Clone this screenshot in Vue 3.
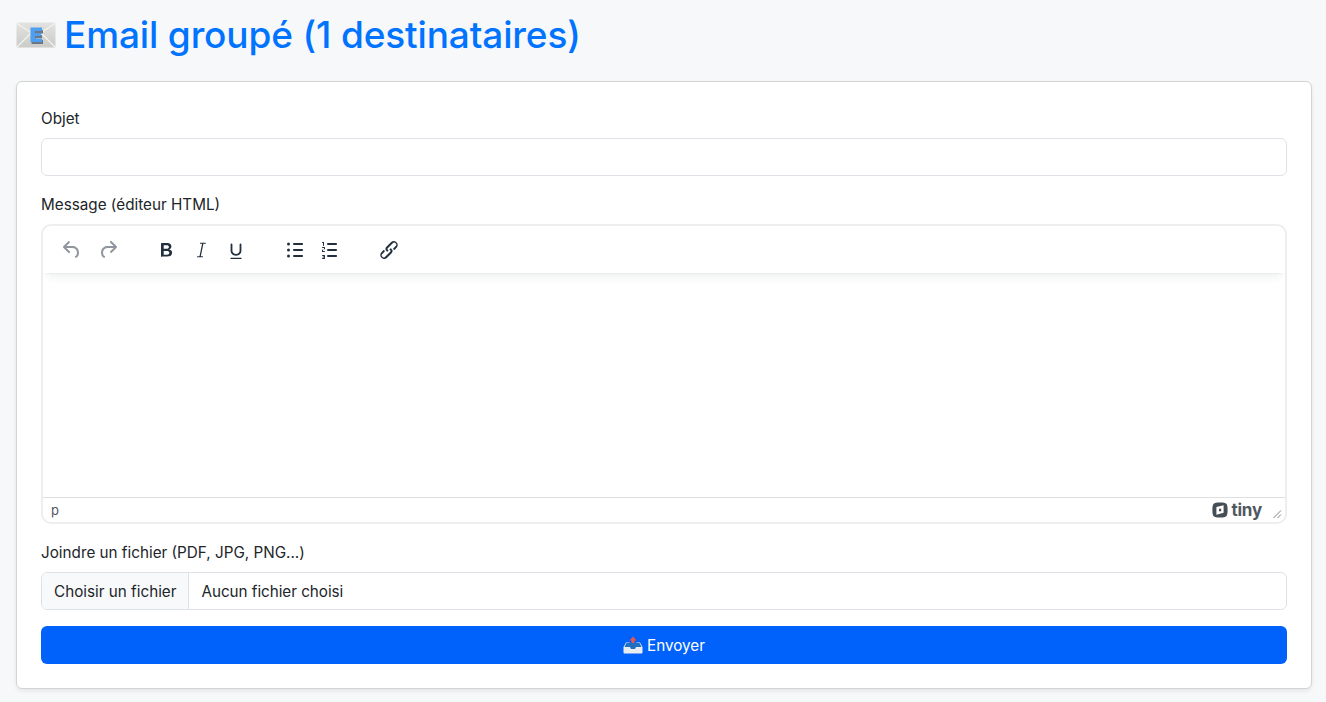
<script setup>
</script>

<template>
  <div class="page">
    <h1 class="title">
      <svg class="mail" viewBox="0 0 40 26" aria-hidden="true">
        <defs>
          <linearGradient id="env" x1="0" y1="0" x2="0" y2="1">
            <stop offset="0" stop-color="#e2e2e0" />
            <stop offset="1" stop-color="#cbcbc8" />
          </linearGradient>
        </defs>
        <rect x="0.5" y="0.5" width="39" height="25" rx="1.5" fill="url(#env)" />
        <path d="M1 1.500 L20 14 L39 1.500 M1 25 L14 12 M39 25 L26 12" fill="none" stroke="#f2f2f0" stroke-width="1.200" />
        <path d="M15.500 8 H27 V11.500 H20 V13 H26 V16 H20 V18 H27 V22 H15.500 Z" fill="#6d7782" />
        <path d="M14.500 5.500 H26 V9 H19 V11 H25 V14 H19 V16.500 H26 V20 H14.500 Z" fill="#4e9ff2" />
      </svg>
      <span>Email groupé (1 destinataires)</span>
    </h1>

    <form class="card" @submit.prevent>
      <div class="field">
        <label class="label" for="objet">Objet</label>
        <input id="objet" class="control" type="text" />
      </div>

      <div class="field">
        <label class="label">Message (éditeur HTML)</label>
        <div class="editor">
          <div class="toolbar">
            <div class="group first">
              <button class="tool" type="button" aria-label="Annuler">
                <svg class="ico muted" viewBox="0 0 24 24"><path d="M6.400 8H12c3.700 0 6.200 2 6.800 5.100.6 2.700-.4 5.600-2.400 6.600a1 1 0 0 1-.9-1.800c1.100-.6 1.700-2.600 1.300-4.400-.4-2-2-3.500-4.800-3.500H6.400l3.300 3.300a1 1 0 1 1-1.400 1.400l-5-5a1 1 0 0 1 0-1.400l5-5a1 1 0 0 1 1.400 1.400L6.400 8Z" /></svg>
              </button>
              <button class="tool" type="button" aria-label="Rétablir">
                <svg class="ico muted" viewBox="0 0 24 24"><path d="M17.600 10H12c-2.800 0-4.400 1.500-4.800 3.500-.4 1.800.2 3.800 1.300 4.400a1 1 0 0 1-.9 1.800c-2-1-3-3.900-2.400-6.600C5.800 10 8.300 8 12 8h5.600l-3.300-3.300a1 1 0 1 1 1.400-1.400l5 5a1 1 0 0 1 0 1.400l-5 5a1 1 0 0 1-1.400-1.400l3.300-3.300Z" /></svg>
              </button>
            </div>
            <div class="group">
              <button class="tool" type="button" aria-label="Gras">
                <svg class="ico" viewBox="0 0 24 24"><path d="M7.800 19c-.3 0-.5 0-.6-.2l-.2-.5V5.700c0-.2 0-.4.2-.5l.6-.2h5c1.500 0 2.700.3 3.500 1 .7.6 1.100 1.400 1.100 2.500 0 .7-.2 1.300-.6 1.800-.4.5-1 .9-1.600 1.100.9.2 1.600.6 2.100 1.200.5.6.8 1.300.8 2.100 0 1.200-.4 2.100-1.200 2.800-.8.6-2 .9-3.700.9H7.800Zm1.900-8.200h2.700c1.700 0 2.500-.6 2.500-1.800 0-1.200-.8-1.800-2.500-1.800H9.700v3.600Zm0 6h3c1.700 0 2.600-.7 2.600-2 0-1.300-.9-1.900-2.600-1.900h-3v3.900Z" /></svg>
              </button>
              <button class="tool" type="button" aria-label="Italique">
                <svg class="ico" viewBox="0 0 24 24"><path d="M16.900 4.700l-.2 1h-2.300l-2.600 12.600h2.200l-.2 1H8l.2-1h2.300l2.600-12.600h-2.200l.2-1h5.800Z" /></svg>
              </button>
              <button class="tool" type="button" aria-label="Souligné">
                <svg class="ico" viewBox="0 0 24 24"><path d="M16.500 5.500c.5 0 .9.400.9.900v6.300c0 2.800-2.400 5-5.400 5s-5.400-2.200-5.400-5V6.400a.9.9 0 1 1 1.800 0v6.300c0 1.800 1.600 3.200 3.600 3.200s3.600-1.400 3.600-3.200V6.400c0-.5.400-.9.900-.9ZM7 19.800h10c.4 0 .6.300.6.600s-.2.600-.6.600H7c-.4 0-.6-.3-.6-.6s.2-.6.600-.6Z" /></svg>
              </button>
            </div>
            <div class="group">
              <button class="tool" type="button" aria-label="Liste à puces">
                <svg class="ico" viewBox="0 0 24 24"><path d="M11 5h8c.6 0 1 .4 1 1s-.4 1-1 1h-8a1 1 0 0 1 0-2Zm0 6h8c.6 0 1 .4 1 1s-.4 1-1 1h-8a1 1 0 0 1 0-2Zm0 6h8c.6 0 1 .4 1 1s-.4 1-1 1h-8a1 1 0 0 1 0-2Z" /><circle cx="5.500" cy="6" r="1.500" /><circle cx="5.500" cy="12" r="1.500" /><circle cx="5.500" cy="18" r="1.500" /></svg>
              </button>
              <button class="tool" type="button" aria-label="Liste numérotée">
                <svg class="ico" viewBox="0 0 24 24"><path d="M10 17h8c.6 0 1 .4 1 1s-.4 1-1 1h-8a1 1 0 0 1 0-2Zm0-6h8c.6 0 1 .4 1 1s-.4 1-1 1h-8a1 1 0 0 1 0-2Zm0-6h8c.6 0 1 .4 1 1s-.4 1-1 1h-8a1 1 0 1 1 0-2ZM6 4v3.500c0 .3-.2.5-.5.5a.5.5 0 0 1-.5-.5V5h-.5a.5.5 0 0 1 0-1H6Zm-1 8.800v.2h1.500c.3 0 .5.2.5.5s-.2.5-.5.5h-2a.5.5 0 0 1-.5-.5v-1c0-.6.4-1 1-1.100l1-.2V10H4.500a.5.5 0 1 1 0-1h2c.3 0 .5.2.5.500v1c0 .6-.4 1-1 1.100l-1 .2ZM6.500 21h-2a.5.5 0 1 1 0-1H6v-.5H5a.5.5 0 1 1 0-1h1V18H4.500a.5.5 0 1 1 0-1h2c.3 0 .5.2.5.5v3c0 .3-.2.5-.5.5Z" /></svg>
              </button>
            </div>
            <div class="group">
              <button class="tool" type="button" aria-label="Lien">
                <svg class="ico" viewBox="0 0 24 24"><path d="M6.200 12.300a1 1 0 0 1 1.400 1.400l-2 2a2 2 0 1 0 2.800 2.800l4.800-4.800a1 1 0 0 0 0-1.400 1 1 0 1 1 1.400-1.300 3 3 0 0 1 0 4.200l-4.800 4.800a4 4 0 0 1-5.600-5.600l2-2.100Zm11.600-.6a1 1 0 0 1-1.400-1.400l2-2a2 2 0 1 0-2.800-2.800l-4.800 4.800a1 1 0 0 0 0 1.400 1 1 0 1 1-1.400 1.300 3 3 0 0 1 0-4.200l4.800-4.800a4 4 0 0 1 5.600 5.600l-2 2.100Z" /></svg>
              </button>
            </div>
          </div>
          <div class="content"></div>
          <div class="status">
            <span class="path">p</span>
            <span class="brand">
              <svg class="tiny-logo" viewBox="0 0 16 16"><path fill-rule="evenodd" d="M8 .4c3.400 0 5.300.5 6.300 1.400 1 1 1.300 2.800 1.300 6.200s-.3 5.200-1.300 6.200c-1 .9-2.900 1.400-6.300 1.400s-5.300-.5-6.300-1.400C.7 13.200.4 11.400.4 8s.3-5.200 1.300-6.200C2.700.9 4.600.4 8 .4Zm3.600 2.800L4.400 5v7.800l7.200-2V3.200ZM7 6.800h2.200v2.400H7V6.800Z" /></svg>
              <span class="tiny-word">tiny</span>
            </span>
            <svg class="grip" viewBox="0 0 10 10"><path d="M9 1.500 1.500 9M9 5.500 5.500 9" fill="none" stroke="#7d8288" stroke-width="1" /></svg>
          </div>
        </div>
      </div>

      <div class="field">
        <label class="label">Joindre un fichier (PDF, JPG, PNG...)</label>
        <div class="file">
          <span class="file-btn">Choisir un fichier</span>
          <span class="file-name">Aucun fichier choisi</span>
        </div>
      </div>

      <button class="send" type="submit">
        <svg class="outbox" viewBox="0 0 20 18" aria-hidden="true">
          <path d="M10 0.500 13.500 4.500H11.500V8H8.500V4.500H6.500Z" fill="#e8574a" />
          <path d="M3 6.500H6.500L8 10H12L13.500 6.500H17L19.500 11V16.500C19.500 17 19 17.500 18.500 17.500H1.500C1 17.500.5 17 .5 16.500V11Z" fill="#e9edf0" />
          <path d="M3.500 7H16.500L18.500 11H13L12 13H8L7 11H1.500Z" fill="#1f6fc2" />
        </svg>
        <span>Envoyer</span>
      </button>
    </form>
  </div>
</template>

<style>
html, body { margin: 0; background: #f8f9fa; }
</style>

<style scoped>
.page {
  box-sizing: border-box;
  min-height: 702px;
  padding: 16px 14px 13px 16px;
  background: #f7f8fa;
  font-family: Inter, "Liberation Sans", sans-serif;
  font-size: 16px;
  line-height: 24px;
  color: #212529;
}
.title {
  display: flex;
  align-items: center;
  gap: 8px;
  margin: 0 0 24px;
  height: 41px;
  font-size: 37px;
  line-height: 37px;
  font-weight: 500;
  color: #0073ff;
  letter-spacing: -0.14px;
}
.title span { margin-top: -4px; }
.mail { width: 40px; height: 26px; margin-top: -4px; }
.card {
  display: flex;
  flex-direction: column;
  gap: 16px;
  padding: 24px;
  background: #fff;
  border: 1px solid #d2d4d6;
  border-radius: 6px;
  box-shadow: 0 2px 4px rgba(0, 0, 0, .08);
}
.field { display: flex; flex-direction: column; gap: 8px; }
.label { display: block; font-size: 15.250px; line-height: 22px; padding-top: 2px; }
.control {
  box-sizing: border-box;
  height: 38px;
  width: 100%;
  padding: 6px 12px;
  border: 1px solid #dee2e6;
  border-radius: 6px;
  background: #fff;
  outline: none;
}
.editor {
  box-sizing: border-box;
  display: flex;
  flex-direction: column;
  height: 300px;
  border: 2px solid #eee;
  border-radius: 10px;
  overflow: hidden;
  background: #fff;
}
.toolbar {
  display: flex;
  align-items: center;
  height: 47px;
  padding: 0 4px;
  flex: none;
  box-shadow: 0 2px 2px -2px rgba(34, 47, 62, .1), 0 8px 8px -4px rgba(34, 47, 62, .07);
  position: relative;
  z-index: 1;
}
.group { display: flex; padding: 0 12px 0 4px; }
.group + .group { margin-left: 8px; }
.group.first { padding: 0 11px 0 7px; gap: 1px; }
.tool {
  display: flex;
  align-items: center;
  justify-content: center;
  width: 35px;
  height: 36px;
  padding: 0;
  border: 0;
  background: none;
  border-radius: 3px;
}
.ico { width: 24px; height: 24px; fill: #222f3e; }
.ico.muted { opacity: .5; }
.content { flex: 1; min-height: 0; background: #fff; }
.status {
  flex: none;
  display: flex;
  align-items: center;
  height: 24px;
  padding: 0 3px 0 8px;
  border-top: 1px solid #dcdee0;
  font-size: 13px;
  color: #50585f;
}
.path { flex: 1; line-height: 20px; }
.brand { display: flex; align-items: center; gap: 3px; margin-right: 10px; }
.tiny-logo { width: 16px; height: 16px; fill: #454d55; }
.tiny-word { font-size: 17px; line-height: 20px; font-weight: 700; color: #50585f; letter-spacing: -.2px; }
.grip { width: 10px; height: 10px; margin-top: 7px; }
.file {
  display: flex;
  box-sizing: border-box;
  height: 38px;
  border: 1px solid #dee2e6;
  border-radius: 6px;
  overflow: hidden;
  font-size: 15.250px;
  line-height: 37px;
  background: #fff;
}
.file-btn {
  padding: 0 12px;
  background: #f8f9fa;
  border-right: 1px solid #dee2e6;
}
.file-name { padding: 0 12px; letter-spacing: -.04px; }
.send {
  display: flex;
  align-items: center;
  justify-content: center;
  gap: 4px;
  height: 38px;
  padding: 0;
  border: 0;
  border-radius: 6px;
  background: #0062fa;
  color: #fff;
  font-family: inherit;
  font-size: 15.250px;
}
.outbox { width: 20px; height: 18px; }
</style>
